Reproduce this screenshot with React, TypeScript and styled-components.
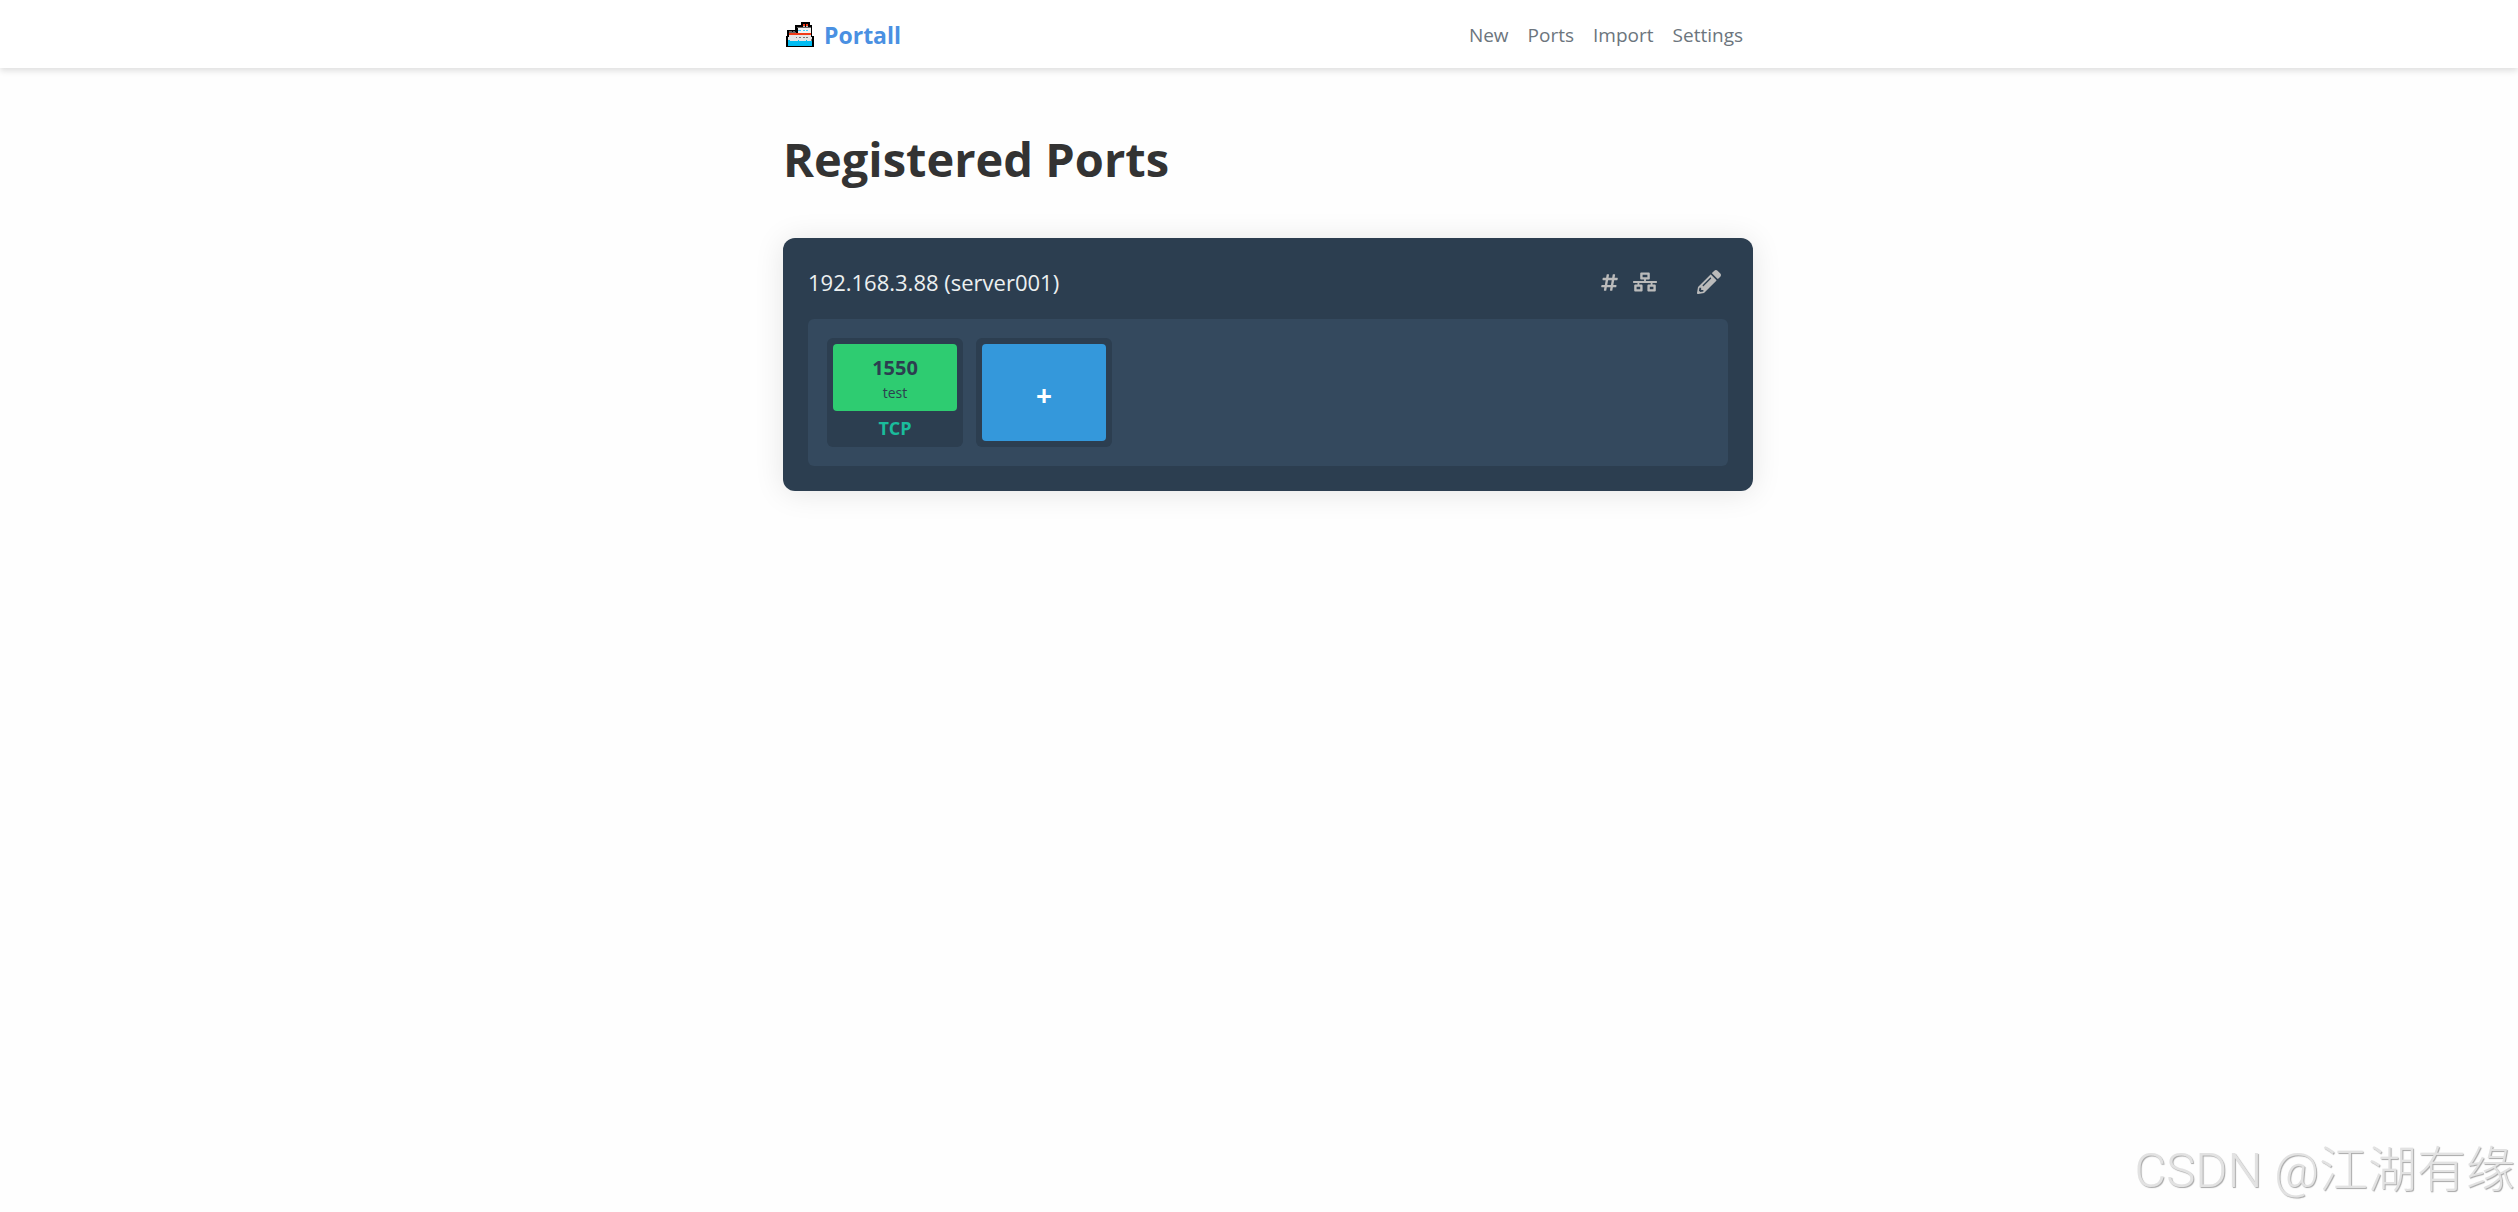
import React from "react";
import styled, { createGlobalStyle } from "styled-components";
import { FaHashtag, FaNetworkWired, FaPencilAlt } from "react-icons/fa";

const GlobalStyle = createGlobalStyle`
  * {
    box-sizing: border-box;
  }
  body {
    margin: 0;
    background: #fefefe;
    color: #333333;
    font-family: "Segoe UI", "Open Sans", "Noto Sans", sans-serif;
  }
`;

const Navbar = styled.header`
  padding-left: 18px;
  background: #ffffff;
  box-shadow: 0 3px 6px rgba(0, 0, 0, 0.12);
`;

const Container = styled.div`
  max-width: 970px;
  margin: 0 auto;
`;

const NavbarRow = styled(Container)`
  display: flex;
  align-items: center;
  justify-content: space-between;
  height: 68px;
  padding-top: 1px;
`;

const Brand = styled.a`
  display: flex;
  align-items: center;
  gap: 10px;
  padding-left: 3px;
  color: #4a90e2;
  font-size: 23px;
  line-height: 32px;
  font-weight: 700;
  text-decoration: none;
`;

const Nav = styled.nav`
  display: flex;
  gap: 19px;
  padding-right: 10px;
`;

const NavLink = styled.a`
  color: #6c757d;
  font-size: 19px;
  line-height: 28px;
  text-decoration: none;
`;

const Main = styled.main`
  padding: 55px 0 40px 18px;
`;

const Title = styled.h1`
  margin: 0 0 43px;
  font-size: 47px;
  line-height: 72px;
  font-weight: 700;
`;

const HostCard = styled.section`
  padding: 25px;
  border-radius: 12px;
  background: #2c3e50;
  box-shadow: 0 2px 30px rgba(0, 0, 0, 0.1);
`;

const HostHeader = styled.div`
  display: flex;
  align-items: center;
  justify-content: space-between;
  height: 38px;
  margin-bottom: 18px;
`;

const HostName = styled.h2`
  margin: 0;
  color: #ecf0f1;
  font-size: 22px;
  line-height: 32px;
  font-weight: 500;
`;

const Actions = styled.div`
  display: flex;
  align-items: center;
  gap: 14px;
  padding-right: 7px;
`;

const IconButton = styled.button<{ $size: number; $apart?: boolean }>`
  display: flex;
  margin: 0 0 0 ${(p) => (p.$apart ? 26 : 0)}px;
  padding: 0;
  border: 0;
  background: none;
  color: #bbbbbb;
  font-size: ${(p) => p.$size}px;
  cursor: pointer;
`;

const PortPanel = styled.div`
  display: flex;
  flex-wrap: wrap;
  gap: 13px;
  padding: 19px;
  border-radius: 6px;
  background: #34495e;
`;

const Slot = styled.div`
  display: flex;
  flex-direction: column;
  width: 136px;
  height: 109px;
  padding: 6px;
  border-radius: 6px;
  background: #2c3e50;
`;

const Port = styled.div`
  display: flex;
  flex-direction: column;
  flex: none;
  align-items: center;
  justify-content: center;
  height: 67px;
  padding-top: 3px;
  border-radius: 4px;
  background: #2ecc71;
  color: #2c3e50;
`;

const PortNumber = styled.span`
  font-size: 20px;
  line-height: 28px;
  font-weight: 700;
`;

const PortLabel = styled.span`
  font-size: 14px;
  line-height: 22px;
`;

const Protocol = styled.span`
  color: #1abc9c;
  font-size: 18px;
  line-height: 34px;
  font-weight: 700;
  text-align: center;
`;

const AddPort = styled.button`
  flex: 1;
  padding: 4px 0 0;
  border: 0;
  border-radius: 4px;
  background: #3498db;
  color: #ffffff;
  font-family: inherit;
  font-size: 28px;
  font-weight: 700;
  cursor: pointer;
`;

const Watermark = styled.div`
  position: fixed;
  right: 3px;
  bottom: 11px;
  color: #e2e2e2;
  font-family: Roboto, "Noto Sans CJK SC", sans-serif;
  font-size: 49px;
  line-height: 60px;
  font-weight: 300;
  text-shadow: 1px 1px 1px #a8a8a8;
  white-space: nowrap;
`;

const Ferry = () => (
  <svg width="28" height="25" viewBox="0 0 28 25" shapeRendering="crispEdges" aria-hidden="true">
    <path fill="#000000" d="M15 0h9v3h2v11h2v11H0V14h1V8h8V3h6z" />
    <path fill="#f03a17" d="M17 2h2v2h-2zM20 2h2v2h-2zM3 11h22v2H3z" />
    <path fill="#bebebe" d="M17 4h2v1h-2zM20 4h2v1h-2z" />
    <path fill="#636363" d="M11 5h14v1H11zM3 9h3v1H3zM7 9h2v1H7zM3 10h7v1H3z" />
    <path fill="#f2f2f2" d="M12 6h13v5H12z" />
    <path fill="#3cd0ff" d="M12 8h3v1h-3zM17 8h2v1h-2zM20 8h2v1h-2z" />
    <path fill="#e5e5e5" d="M3 13h22v5H3zM2 15h24v4H2z" />
    <path fill="#767676" d="M10 15h1v1h-1zM13 15h2v1h-2zM17 15h2v1h-2zM20 15h2v1h-2zM25 17h1v2h-1z" />
    <path fill="#00bcf2" d="M2 18h2v1h8v-1h1v1h7v-1h1v1h5v5H2z" />
  </svg>
);

const links = ["New", "Ports", "Import", "Settings"];

export default function App() {
  return (
    <>
      <GlobalStyle />
      <Navbar>
        <NavbarRow>
          <Brand href="#">
            <Ferry />
            Portall
          </Brand>
          <Nav>
            {links.map((label) => (
              <NavLink key={label} href={`#${label.toLowerCase()}`}>
                {label}
              </NavLink>
            ))}
          </Nav>
        </NavbarRow>
      </Navbar>
      <Main>
        <Container>
          <Title>Registered Ports</Title>
          <HostCard>
            <HostHeader>
              <HostName>192.168.3.88 (server001)</HostName>
              <Actions>
                <IconButton $size={19} aria-label="Sort by port number">
                  <FaHashtag />
                </IconButton>
                <IconButton $size={24} aria-label="Sort by protocol">
                  <FaNetworkWired />
                </IconButton>
                <IconButton $size={24} $apart aria-label="Edit host">
                  <FaPencilAlt />
                </IconButton>
              </Actions>
            </HostHeader>
            <PortPanel>
              <Slot>
                <Port>
                  <PortNumber>1550</PortNumber>
                  <PortLabel>test</PortLabel>
                </Port>
                <Protocol>TCP</Protocol>
              </Slot>
              <Slot>
                <AddPort aria-label="Add port">+</AddPort>
              </Slot>
            </PortPanel>
          </HostCard>
        </Container>
      </Main>
      <Watermark>CSDN @江湖有缘</Watermark>
    </>
  );
}
